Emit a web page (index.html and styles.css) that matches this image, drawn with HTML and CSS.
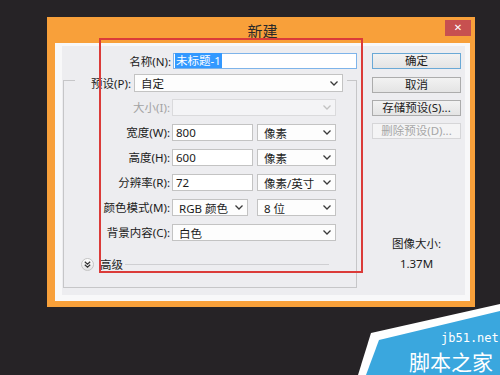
FILE: index.html
```html
<!DOCTYPE html>
<html lang="zh-CN">
<head>
  <meta charset="UTF-8" />
  <title>新建</title>
  <link rel="stylesheet" href="styles.css">
</head>
<body>
  <div class="window">
    <div class="title-bar">
      <span></span>
      <span class="title-text">新建</span>
      <button class="btn-close">✕</button>
    </div>

    <div class="client">
      <div class="panel">
        <div class="form-col">
          <div class="name-row">
            <span class="label name-label">名称(N):</span>
            <div class="input input-focus"><span class="selected">未标题-1</span></div>
          </div>

          <fieldset class="group">
            <legend class="legend">
              <span class="legend-label">预设(P):</span>
              <div class="combo combo-preset">
                <span>自定</span>
                <svg class="chev" width="8" height="5" viewBox="0 0 8 5"><path d="M0.5 0.5L4 4L7.5 0.5" /></svg>
              </div>
            </legend>

            <div class="field-row">
              <span class="label label-off">大小(I):</span>
              <div class="combo combo-off w-full">
                <span></span>
                <svg class="chev" width="8" height="5" viewBox="0 0 8 5"><path d="M0.5 0.5L4 4L7.5 0.5" /></svg>
              </div>
            </div>

            <div class="field-row">
              <span class="label">宽度(W):</span>
              <div class="input w-value">800</div>
              <div class="combo w-unit">
                <span>像素</span>
                <svg class="chev" width="8" height="5" viewBox="0 0 8 5"><path d="M0.5 0.5L4 4L7.5 0.5" /></svg>
              </div>
            </div>

            <div class="field-row">
              <span class="label">高度(H):</span>
              <div class="input w-value">600</div>
              <div class="combo w-unit">
                <span>像素</span>
                <svg class="chev" width="8" height="5" viewBox="0 0 8 5"><path d="M0.5 0.5L4 4L7.5 0.5" /></svg>
              </div>
            </div>

            <div class="field-row">
              <span class="label">分辨率(R):</span>
              <div class="input w-value">72</div>
              <div class="combo w-unit">
                <span>像素/英寸</span>
                <svg class="chev" width="8" height="5" viewBox="0 0 8 5"><path d="M0.5 0.5L4 4L7.5 0.5" /></svg>
              </div>
            </div>

            <div class="field-row">
              <span class="label">颜色模式(M):</span>
              <div class="combo w-mode">
                <span>RGB 颜色</span>
                <svg class="chev" width="8" height="5" viewBox="0 0 8 5"><path d="M0.5 0.5L4 4L7.5 0.5" /></svg>
              </div>
              <div class="combo w-unit w-bits">
                <span>8 位</span>
                <svg class="chev" width="8" height="5" viewBox="0 0 8 5"><path d="M0.5 0.5L4 4L7.5 0.5" /></svg>
              </div>
            </div>

            <div class="field-row">
              <span class="label">背景内容(C):</span>
              <div class="combo w-full">
                <span>白色</span>
                <svg class="chev" width="8" height="5" viewBox="0 0 8 5"><path d="M0.5 0.5L4 4L7.5 0.5" /></svg>
              </div>
            </div>

            <div class="advanced">
              <span class="adv-icon">
                <svg width="7" height="7" viewBox="0 0 7 7"><path d="M0.8 0.8L3.5 3.2L6.2 0.8M0.8 3.8L3.5 6.2L6.2 3.8" /></svg>
              </span>
              <span class="adv-text">高级</span>
              <span class="adv-line"></span>
            </div>
          </fieldset>
        </div>

        <div class="btn-col">
          <button class="btn btn-default">确定</button>
          <button class="btn">取消</button>
          <button class="btn">存储预设(S)...</button>
          <button class="btn btn-off">删除预设(D)...</button>

          <div class="size-info">
            <p>图像大小:</p>
            <p>1.37M</p>
          </div>
        </div>
      </div>
    </div>

    <div class="highlight-box"></div>
  </div>

  <svg class="site-mark" width="145" height="75" viewBox="0 0 145 75">
    <polygon points="3,75 16,33 145,4 145,75" fill="#ffffff" />
    <polygon points="11,75 24,40 145,11 145,75" fill="#3aa7de" />
    <text x="86" y="42" class="mark-url">jb51.net</text>
    <text x="54" y="70" class="mark-name">脚本之家</text>
  </svg>
</body>
</html>
```

FILE: styles.css
```css
body {
  margin: 0;
  padding: 17px 0 0 47px;
  background-color: #262326;
  font-family: "Noto Sans", "Noto Sans CJK SC", sans-serif;
  font-size: 11.5px;
  color: #1b1b1b;
  overflow: hidden;
}
.window {
  position: relative;
  width: 428px;
  height: 290px;
  box-sizing: border-box;
  background-color: #f8a03a;
  padding: 0 5px 6px 8px;
}
.title-bar {
  height: 26px;
  display: grid;
  grid-template-columns: 1fr auto 1fr;
  align-items: center;
}
.title-text {
  font-size: 15px;
  color: #2a2a2a;
}
.btn-close {
  justify-self: end;
  align-self: start;
  margin-top: 3px;
  margin-right: -1px;
  width: 26px;
  height: 16px;
  padding: 0;
  border: none;
  background-color: #c75050;
  color: #fff;
  font-size: 10px;
  line-height: 16px;
  font-family: "DejaVu Sans", sans-serif;
}
.client {
  width: 415px;
  height: 258px;
  box-sizing: border-box;
  background-color: #f8f8f9;
  padding: 3px 5px 6px 7px;
}
.panel {
  height: 100%;
  box-sizing: border-box;
  background-color: #ededf0;
  padding: 7px 4px 0 1px;
  display: flex;
  justify-content: space-between;
}
.form-col {
  width: 294px;
}
.name-row {
  display: flex;
  align-items: center;
  height: 16px;
}
.label {
  width: 106px;
  margin-right: 2px;
  text-align: right;
  white-space: nowrap;
  line-height: 17px;
}
.name-label {
  width: 108px;
}
.label-off {
  color: #a3a3a3;
}
.input {
  height: 17px;
  box-sizing: border-box;
  background-color: #fff;
  border: 1px solid #c3c3c3;
  padding-left: 3px;
  line-height: 15px;
  white-space: nowrap;
}
.input-focus {
  width: 184px;
  height: 16px;
  border-color: #7eb4ea;
  padding-left: 1px;
  line-height: 14px;
}
.selected {
  background-color: #3399ff;
  color: #fff;
  padding: 0 1px;
}
.group {
  margin: 0;
  width: 294px;
  min-width: 0;
  box-sizing: border-box;
  padding: 7px 0 16px 0;
  border: 1px solid #c6c6c8;
}
.legend {
  margin-left: 11px;
  padding: 5px 4px 0 13px;
  display: flex;
  align-items: center;
}
.legend-label {
  width: 43px;
  margin-right: 3px;
  text-align: right;
  white-space: nowrap;
}
.combo {
  height: 17px;
  box-sizing: border-box;
  background-color: #fdfdfd;
  border: 1px solid #c3c3c3;
  padding: 0 4px 0 6px;
  display: flex;
  justify-content: space-between;
  align-items: center;
  white-space: nowrap;
}
.combo-preset {
  width: 209px;
  height: 18px;
}
.chev {
  flex-shrink: 0;
}
.chev path {
  fill: none;
  stroke: #3a3a3a;
  stroke-width: 1.3;
}
.combo-off {
  background-color: #f4f4f6;
  border-color: #dadadc;
}
.combo-off .chev path {
  stroke: #c2c2c2;
}
.field-row {
  display: flex;
  align-items: center;
  height: 17px;
  margin-bottom: 8px;
}
.w-full {
  width: 164px;
}
.w-value {
  width: 81px;
}
.w-unit {
  width: 79px;
  margin-left: 4px;
}
.w-mode {
  width: 76px;
}
.w-bits {
  margin-left: 9px;
}
.advanced {
  display: flex;
  align-items: center;
  height: 14px;
  margin-top: 16px;
  padding-left: 17px;
  padding-right: 27px;
}
.adv-icon {
  width: 13px;
  height: 13px;
  box-sizing: border-box;
  border-radius: 50%;
  border: 1px solid #c4c4c4;
  background: linear-gradient(#ffffff, #e2e2e4);
  display: flex;
  align-items: center;
  justify-content: center;
}
.adv-icon path {
  fill: none;
  stroke: #333;
  stroke-width: 1.2;
}
.adv-text {
  margin-left: 6px;
  margin-right: 2px;
}
.adv-line {
  flex: 1;
  height: 1px;
  background-color: #cfcfd2;
}
.btn-col {
  width: 89px;
  display: flex;
  flex-direction: column;
}
.btn {
  width: 89px;
  height: 16px;
  padding: 0;
  margin-bottom: 7px;
  box-sizing: border-box;
  border: 1px solid #acacac;
  background: linear-gradient(#f2f2f2, #e4e4e4);
  font-family: "Noto Sans", "Noto Sans CJK SC", sans-serif;
  font-size: 11.5px;
  line-height: 14px;
  color: #1b1b1b;
}
.btn-default {
  border-color: #6aa9d6;
  margin-bottom: 8px;
}
.btn-off {
  background: #f4f4f5;
  border-color: #d6d6d8;
  color: #a6a6a6;
}
.size-info {
  margin-top: 88px;
  text-align: center;
  line-height: 20px;
}
.size-info p {
  margin: 0;
}
.highlight-box {
  position: absolute;
  left: 52px;
  top: 21px;
  width: 264px;
  height: 235px;
  box-sizing: border-box;
  border: 2px solid #db3b39;
}
.site-mark {
  position: absolute;
  right: 0;
  bottom: 0;
}
.mark-url {
  font-family: "DejaVu Sans Mono", monospace;
  font-size: 12px;
  fill: #ffffff;
}
.mark-name {
  font-family: "Noto Sans CJK SC", sans-serif;
  font-size: 21px;
  fill: #ffffff;
}
```
